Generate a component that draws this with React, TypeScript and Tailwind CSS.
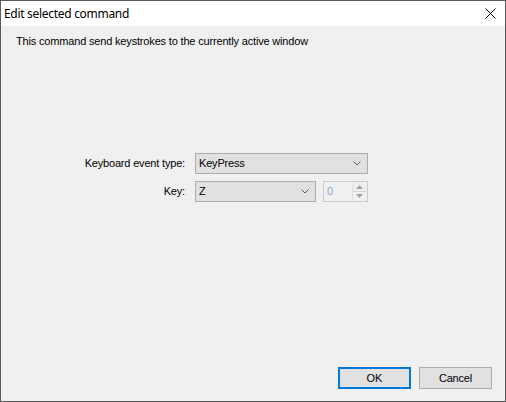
const ui = { fontFamily: '"Liberation Sans", Arial, sans-serif' };
const title = { fontFamily: '"Noto Sans", "Open Sans", sans-serif' };

function Chevron() {
  return (
    <svg width="8" height="5" viewBox="0 0 8 5">
      <path d="M0.5 0.5 L4 4 L7.5 0.5" fill="none" stroke="#606060" strokeWidth="1" />
    </svg>
  );
}

function Combo({ value, width }: { value: string; width: string }) {
  return (
    <div className={`flex h-[21px] items-center justify-between border border-[#adadad] bg-[#e1e1e1] pl-[3px] pr-[6px] text-[11px] tracking-[-0.18px] text-black ${width}`}>
      <span>{value}</span>
      <Chevron />
    </div>
  );
}

export default function App() {
  return (
    <div className="flex h-[402px] w-[506px] flex-col border border-[#5a5a5a] bg-[#f0f0f0]" style={ui}>
      {/* title bar */}
      <div className="flex h-[25px] shrink-0 items-center justify-between bg-white pl-[3px] pr-[9px]">
        <span className="text-[12px] tracking-[-0.3px] text-black" style={title}>Edit selected command</span>
        <svg width="11" height="11" viewBox="0 0 11 11" className="mb-[1px]">
          <path d="M0.5 0.5 L10.5 10.5 M10.5 0.5 L0.5 10.5" stroke="#000" strokeWidth="1" />
        </svg>
      </div>

      <div className="flex flex-1 flex-col px-[15px]">
        <p className="mt-[9px] text-[11px] leading-[13px] tracking-[-0.17px] text-black">
          This command send keystrokes to the currently active window
        </p>

        <div className="mt-[105px] flex flex-col gap-[7px]">
          <div className="flex items-center">
            <span className="w-[179px] pr-[10px] text-right text-[11px] tracking-[-0.18px] text-black">Keyboard event type:</span>
            <Combo value="KeyPress" width="w-[173px]" />
          </div>
          <div className="flex items-center">
            <span className="w-[179px] pr-[10px] text-right text-[11px] tracking-[-0.18px] text-black">Key:</span>
            <Combo value="Z" width="w-[121px]" />
            <div className="ml-[7px] flex h-[21px] w-[45px] items-center justify-between border border-[#cccccc] bg-[#f0f0f0] pl-[3px] pr-[1px]">
              <span className="text-[11px] text-[#8aa6c8]">0</span>
              <div className="flex h-[17px] w-[14px] flex-col border-l border-[#e0e0e0] bg-[#f0f0f0]">
                <div className="flex flex-1 items-center justify-center border-b border-[#d6d6d6]">
                  <svg width="7" height="4" viewBox="0 0 7 4"><path d="M3.5 0 L7 4 L0 4 Z" fill="#a0a0a0" /></svg>
                </div>
                <div className="flex flex-1 items-center justify-center">
                  <svg width="7" height="4" viewBox="0 0 7 4"><path d="M0 0 L7 0 L3.5 4 Z" fill="#a0a0a0" /></svg>
                </div>
              </div>
            </div>
          </div>
        </div>

        <div className="mt-auto mb-[12px] mr-[-2px] flex justify-end gap-[8px]">
          <button className="h-[22px] w-[73px] border-2 border-[#0078d7] bg-[#e1e1e1] text-[11px] text-black">OK</button>
          <button className="h-[22px] w-[73px] border border-[#adadad] bg-[#e1e1e1] text-[11px] tracking-[-0.18px] text-black">Cancel</button>
        </div>
      </div>
    </div>
  );
}
